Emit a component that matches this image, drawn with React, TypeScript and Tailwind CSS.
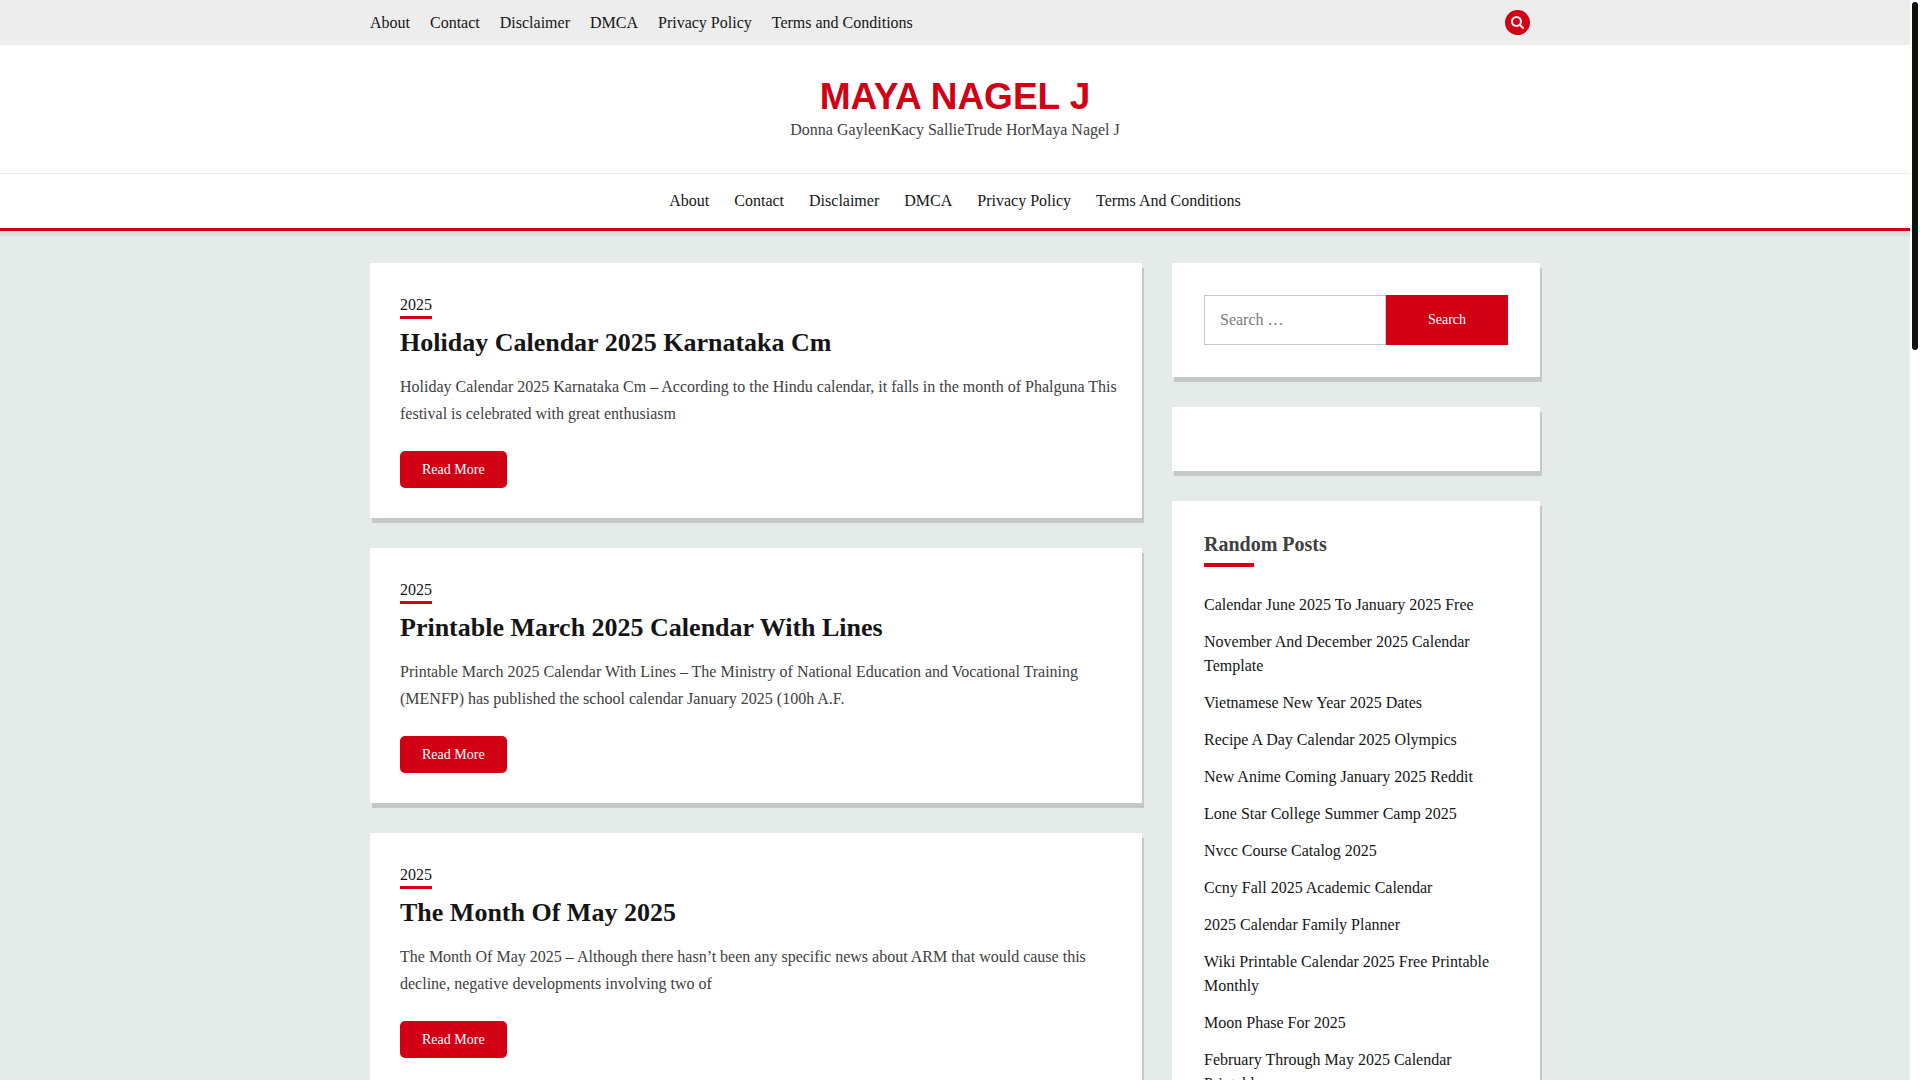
import { useState } from "react";

const pages = ["About", "Contact", "Disclaimer", "DMCA", "Privacy Policy"];
const topLinks = [...pages, "Terms and Conditions"];
const mainLinks = [...pages, "Terms And Conditions"];

const posts = [
  {
    title: "Holiday Calendar 2025 Karnataka Cm",
    excerpt:
      "Holiday Calendar 2025 Karnataka Cm – According to the Hindu calendar, it falls in the month of Phalguna This festival is celebrated with great enthusiasm",
  },
  {
    title: "Printable March 2025 Calendar With Lines",
    excerpt:
      "Printable March 2025 Calendar With Lines – The Ministry of National Education and Vocational Training (MENFP) has published the school calendar January 2025 (100h A.F.",
  },
  {
    title: "The Month Of May 2025",
    excerpt:
      "The Month Of May 2025 – Although there hasn’t been any specific news about ARM that would cause this decline, negative developments involving two of",
  },
];

const randomPosts = [
  "Calendar June 2025 To January 2025 Free",
  "November And December 2025 Calendar Template",
  "Vietnamese New Year 2025 Dates",
  "Recipe A Day Calendar 2025 Olympics",
  "New Anime Coming January 2025 Reddit",
  "Lone Star College Summer Camp 2025",
  "Nvcc Course Catalog 2025",
  "Ccny Fall 2025 Academic Calendar",
  "2025 Calendar Family Planner",
  "Wiki Printable Calendar 2025 Free Printable Monthly",
  "Moon Phase For 2025",
  "February Through May 2025 Calendar Printable",
];

function TopBar() {
  return (
    <div className="bg-[#ededed]">
      <div className="mx-auto flex h-[45px] max-w-[1170px] items-center justify-between">
        <nav aria-label="Top menu">
          <ul className="flex gap-5">
            {topLinks.map((label) => (
              <li key={label}>
                <a href="#">{label}</a>
              </li>
            ))}
          </ul>
        </nav>
        <button
          type="button"
          aria-label="Open search"
          className="mr-2.5 flex size-[25px] items-center justify-center rounded-full bg-[#d10014] text-[#ededed]"
        >
          <svg viewBox="0 0 1664 1664" className="size-[13px]" fill="currentColor" aria-hidden="true">
            <path d="M1152 704q0-185-131.500-316.500T704 256 387.500 387.500 256 704t131.500 316.500T704 1152t316.500-131.500T1152 704zm512 832q0 52-38 90t-90 38q-54 0-90-38l-343-342q-179 124-399 124-143 0-273.500-55.500t-225-150-150-225T0 704t55.500-273.500 150-225 225-150T704 0t273.500 55.500 225 150 150 225T1408 704q0 220-124 399l343 343q37 37 37 90z" />
          </svg>
        </button>
      </div>
    </div>
  );
}

function Header() {
  return (
    <header className="bg-white">
      <div className="flex flex-col items-center pt-[31px] pb-[31px] text-center">
        <h1 className="font-['Liberation_Sans',sans-serif] text-[37px] leading-[42px] font-bold text-[#d10014]">
          <a href="#">MAYA NAGEL J</a>
        </h1>
        <p className="leading-6 text-[#404040]">Donna GayleenKacy SallieTrude HorMaya Nagel J</p>
      </div>
      <nav
        aria-label="Main menu"
        className="relative border-t border-b-3 border-t-[#ededed] border-b-[#d10014] shadow-[0_5px_0_rgba(0,0,0,0.05)]"
      >
        <ul className="flex h-[54px] items-center justify-center gap-[25px]">
          {mainLinks.map((label) => (
            <li key={label}>
              <a href="#">{label}</a>
            </li>
          ))}
        </ul>
      </nav>
    </header>
  );
}

function PostCard({ title, excerpt }: { title: string; excerpt: string }) {
  return (
    <article className="flex flex-col items-start bg-white p-[30px] shadow-[2px_5px_0_rgba(0,0,0,0.14)]">
      <a href="#" className="border-b-3 border-[#d10014] leading-[23px]">
        2025
      </a>
      <h2 className="mt-[7px] text-[26px] leading-[34px] font-bold">
        <a href="#">{title}</a>
      </h2>
      <p className="mt-[13px] -mr-5 leading-[27px] text-[#404040]">{excerpt}</p>
      <a href="#" className="mt-6 rounded-[5px] bg-[#d10014] px-[22px] text-sm leading-[37px] text-white">
        Read More
      </a>
    </article>
  );
}

function Sidebar() {
  const [query, setQuery] = useState("");
  return (
    <aside className="flex flex-col gap-[30px]">
      <section className="bg-white p-8 shadow-[2px_5px_0_rgba(0,0,0,0.14)]">
        <form role="search" className="flex h-[50px]" onSubmit={(e) => e.preventDefault()}>
          <input
            type="search"
            aria-label="Search for"
            placeholder="Search …"
            value={query}
            onChange={(e) => setQuery(e.target.value)}
            className="min-w-0 flex-1 border border-[#c8c8c8] px-[15px] placeholder:text-[#7b7b7b]"
          />
          <button type="submit" className="w-[122px] bg-[#d10014] text-sm text-white">
            Search
          </button>
        </form>
      </section>
      <section className="bg-white p-8 shadow-[2px_5px_0_rgba(0,0,0,0.14)]" />
      <section className="bg-white p-8 shadow-[2px_5px_0_rgba(0,0,0,0.14)]">
        <h2 className="text-xl leading-[22px] font-bold text-[#404040]">Random Posts</h2>
        <div className="mt-2 h-1 w-[50px] bg-[#d10014]" />
        <ul className="mt-[26px] flex flex-col gap-[13px]">
          {randomPosts.map((label) => (
            <li key={label} className="leading-6">
              <a href="#">{label}</a>
            </li>
          ))}
        </ul>
      </section>
    </aside>
  );
}

export default function App() {
  return (
    <div className="flex h-screen overflow-hidden bg-white font-['Liberation_Serif',serif] text-base text-[#151515] [text-rendering:optimizeSpeed]">
      <div className="min-w-0 flex-1 bg-[#e5ebe9]">
        <TopBar />
        <Header />
        <div className="mx-auto mt-8 grid max-w-[1170px] grid-cols-[minmax(0,1fr)_368px] gap-[30px]">
          <main className="flex flex-col gap-[30px]">
            {posts.map((post) => (
              <PostCard key={post.title} {...post} />
            ))}
          </main>
          <Sidebar />
        </div>
      </div>
      <div className="w-2.5 p-0.5" aria-hidden="true">
        <div className="h-[348px] w-1.5 rounded-full bg-[#0f110f]" />
      </div>
    </div>
  );
}
